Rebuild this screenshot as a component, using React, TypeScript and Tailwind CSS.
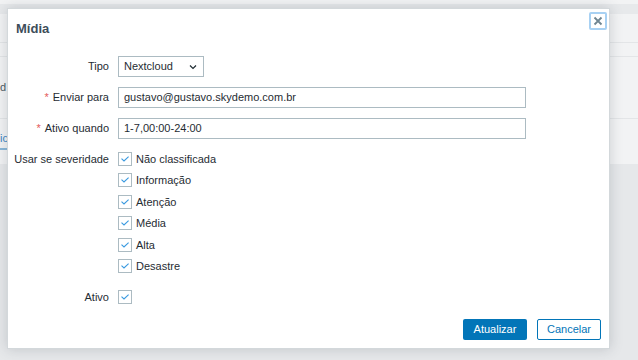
import React from "react";

const severities = ["Não classificada", "Informação", "Atenção", "Média", "Alta", "Desastre"];

function Check() {
  return (
    <span className="flex h-[14px] w-[14px] shrink-0 items-center justify-center border border-[#acbbc2] bg-white">
      <svg width="10" height="8" viewBox="0 0 10 8" fill="none">
        <path d="M1.5 3.6 L4 6 L8.6 1.6" stroke="#3a9ae0" strokeWidth="1.1" />
      </svg>
    </span>
  );
}

function Label({ text, required }: { text: string; required?: boolean }) {
  return (
    <div className="flex h-[21px] w-[93px] shrink-0 items-center justify-end whitespace-nowrap">
      {required && <span className="mr-[4px] text-[#e45959]">*</span>}
      {text}
    </div>
  );
}

export default function App() {
  return (
    <div className="relative h-[360px] w-[638px] overflow-hidden bg-[#e6e8ea] font-['Liberation_Sans',Arial,sans-serif] text-[11px] text-[#1f2c33]">
      {/* page behind the overlay */}
      <div className="h-[4px] bg-[#f2f3f4]" />
      <div className="h-[10px] bg-[#e7e9eb]" />
      <div className="flex h-[150px] flex-col bg-[#f2f3f4]">
        <div className="h-[29px] border-b border-[#e3e5e7]" />
        <div className="h-[14px] border-b border-[#e3e5e7]" />
        <div className="flex h-[62px] items-center border-b border-[#e3e5e7] text-[#4b5a62]">
          <span>d</span>
        </div>
        <div className="mt-[10px] flex h-[22px] items-center">
          <span className="border-b-2 border-[#8ab7d8] pb-[2px] text-[#3b86c2]">ic</span>
        </div>
      </div>

      {/* modal */}
      <div className="absolute left-[7px] top-[8px] h-[341px] w-[603px] border border-[#d3d8db] bg-white shadow-[0_0_12px_rgba(60,70,80,0.22)]">
        <div className="px-[8px] pt-[11px]">
          <h2 className="h-[18px] text-[13px] font-bold leading-[18px] text-[#3d4d5a]">Mídia</h2>
        </div>
        <button className="absolute right-[2px] top-[3px] flex h-[18px] w-[18px] items-center justify-center rounded-[2px] border-2 border-[#a8d1f3] bg-white">
          <svg width="10" height="10" viewBox="0 0 10 10">
            <path d="M1.5 1.5 L8.5 8.5 M8.5 1.5 L1.5 8.5" stroke="#6f8591" strokeWidth="1.8" />
          </svg>
        </button>

        <div className="mt-[18px] flex flex-col px-[8px]">
          <div className="flex gap-[9px]">
            <Label text="Tipo" />
            <div className="flex h-[21px] w-[86px] items-center justify-between border border-[#acbbc2] pl-[5px] pr-[6px]">
              <span>Nextcloud</span>
              <svg width="8" height="6" viewBox="0 0 8 6" fill="none">
                <path d="M1 1.5 L4 4.5 L7 1.5" stroke="#1f2c33" strokeWidth="1.2" />
              </svg>
            </div>
          </div>
          <div className="mt-[10px] flex gap-[9px]">
            <Label text="Enviar para" required />
            <div className="flex h-[21px] w-[408px] items-center border border-[#acbbc2] px-[5px]">
              gustavo@gustavo.skydemo.com.br
            </div>
          </div>
          <div className="mt-[10px] flex gap-[9px]">
            <Label text="Ativo quando" required />
            <div className="flex h-[21px] w-[408px] items-center border border-[#acbbc2] px-[5px]">
              1-7,00:00-24:00
            </div>
          </div>
          <div className="mt-[9px] flex gap-[9px]">
            <div className="flex h-[21.5px] w-[93px] shrink-0 items-center justify-end whitespace-nowrap">
              Usar se severidade
            </div>
            <div className="flex flex-col">
              {severities.map((s) => (
                <div key={s} className="flex h-[21.5px] items-center gap-[4px]">
                  <Check />
                  <span>{s}</span>
                </div>
              ))}
            </div>
          </div>
          <div className="mt-[9px] flex gap-[9px]">
            <div className="flex h-[21.5px] w-[93px] shrink-0 items-center justify-end">Ativo</div>
            <div className="flex h-[21.5px] items-center">
              <Check />
            </div>
          </div>
        </div>

        <div className="absolute bottom-[8px] right-[8px] flex gap-[10px]">
          <button className="h-[21px] w-[64px] rounded-[2px] bg-[#0275b8] text-white">Atualizar</button>
          <button className="h-[21px] w-[64px] rounded-[2px] border border-[#0275b8] bg-white text-[#0275b8]">
            Cancelar
          </button>
        </div>
      </div>
    </div>
  );
}
